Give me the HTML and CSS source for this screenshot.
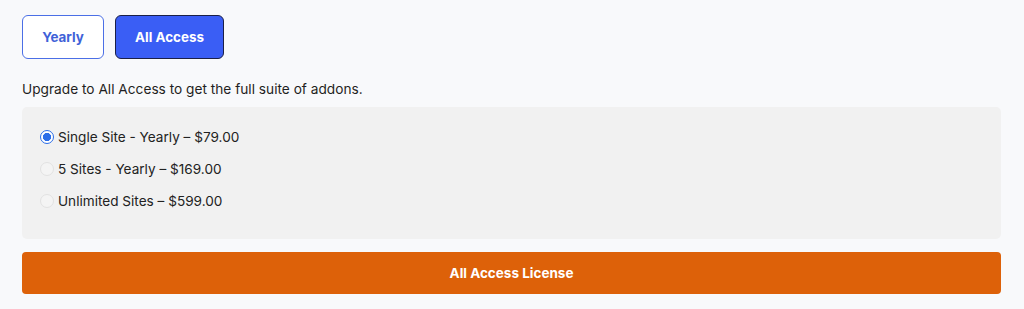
FILE: index.html
```html
<!DOCTYPE html>
<html>
<head>
<meta charset="utf-8">
<link rel="stylesheet" href="styles.css">
</head>
<body>
<div class="page">
  <div class="tabs">
    <button class="tab tab-outline">Yearly</button>
    <button class="tab tab-active">All Access</button>
  </div>
  <p class="intro">Upgrade to All Access to get the full suite of addons.</p>
  <div class="options">
    <label class="option"><span class="radio checked"></span>Single Site - Yearly – $79.00</label>
    <label class="option"><span class="radio"></span>5 Sites - Yearly – $169.00</label>
    <label class="option"><span class="radio"></span>Unlimited Sites – $599.00</label>
  </div>
  <button class="license">All Access License</button>
</div>
</body>
</html>
```
FILE: styles.css
```css
html, body {
  margin: 0;
  padding: 0;
  background: #f8f9fb;
}
body {
  font-family: Inter, "Noto Sans", sans-serif;
  color: #1d1d1f;
}
.page {
  padding: 15px 23px 0 22px;
}
.tabs {
  display: flex;
  gap: 11px;
}
.tab {
  height: 44px;
  border-radius: 6px;
  font-family: Inter, sans-serif;
  font-weight: 700;
  font-size: 13.4px;
  padding: 0;
  cursor: pointer;
}
.tab-outline {
  width: 82px;
  background: #fff;
  border: 1.5px solid #4b6fe6;
  color: #3f62d8;
}
.tab-active {
  width: 109px;
  background: #3a5ef5;
  border: 1.5px solid #1b2047;
  color: #fff;
}
.intro {
  margin: 21px 0 0;
  font-size: 13.7px;
  line-height: 18px;
  color: #1f1f22;
}
.options {
  margin-top: 9px;
  background: #f1f1f1;
  border-radius: 5px;
  padding: 20px 18px 28px;
  display: flex;
  flex-direction: column;
  gap: 12px;
}
.option {
  display: flex;
  align-items: center;
  height: 20px;
  font-size: 13.6px;
  color: #222;
}
.radio {
  width: 14px;
  height: 14px;
  border-radius: 50%;
  border: 1px solid #e2e2e2;
  background: #f4f4f4;
  box-sizing: border-box;
  margin-right: 4px;
  flex: none;
}
.radio.checked {
  border: 1px solid #2b6de8;
  background: radial-gradient(circle, #2b6de8 0 3.8px, #fff 4.4px);
}
.license {
  display: block;
  width: 100%;
  margin-top: 13px;
  height: 42px;
  border: none;
  border-radius: 4px;
  background: #dd6109;
  color: #fff;
  font-family: Inter, sans-serif;
  font-weight: 700;
  font-size: 13.5px;
  cursor: pointer;
}
```
